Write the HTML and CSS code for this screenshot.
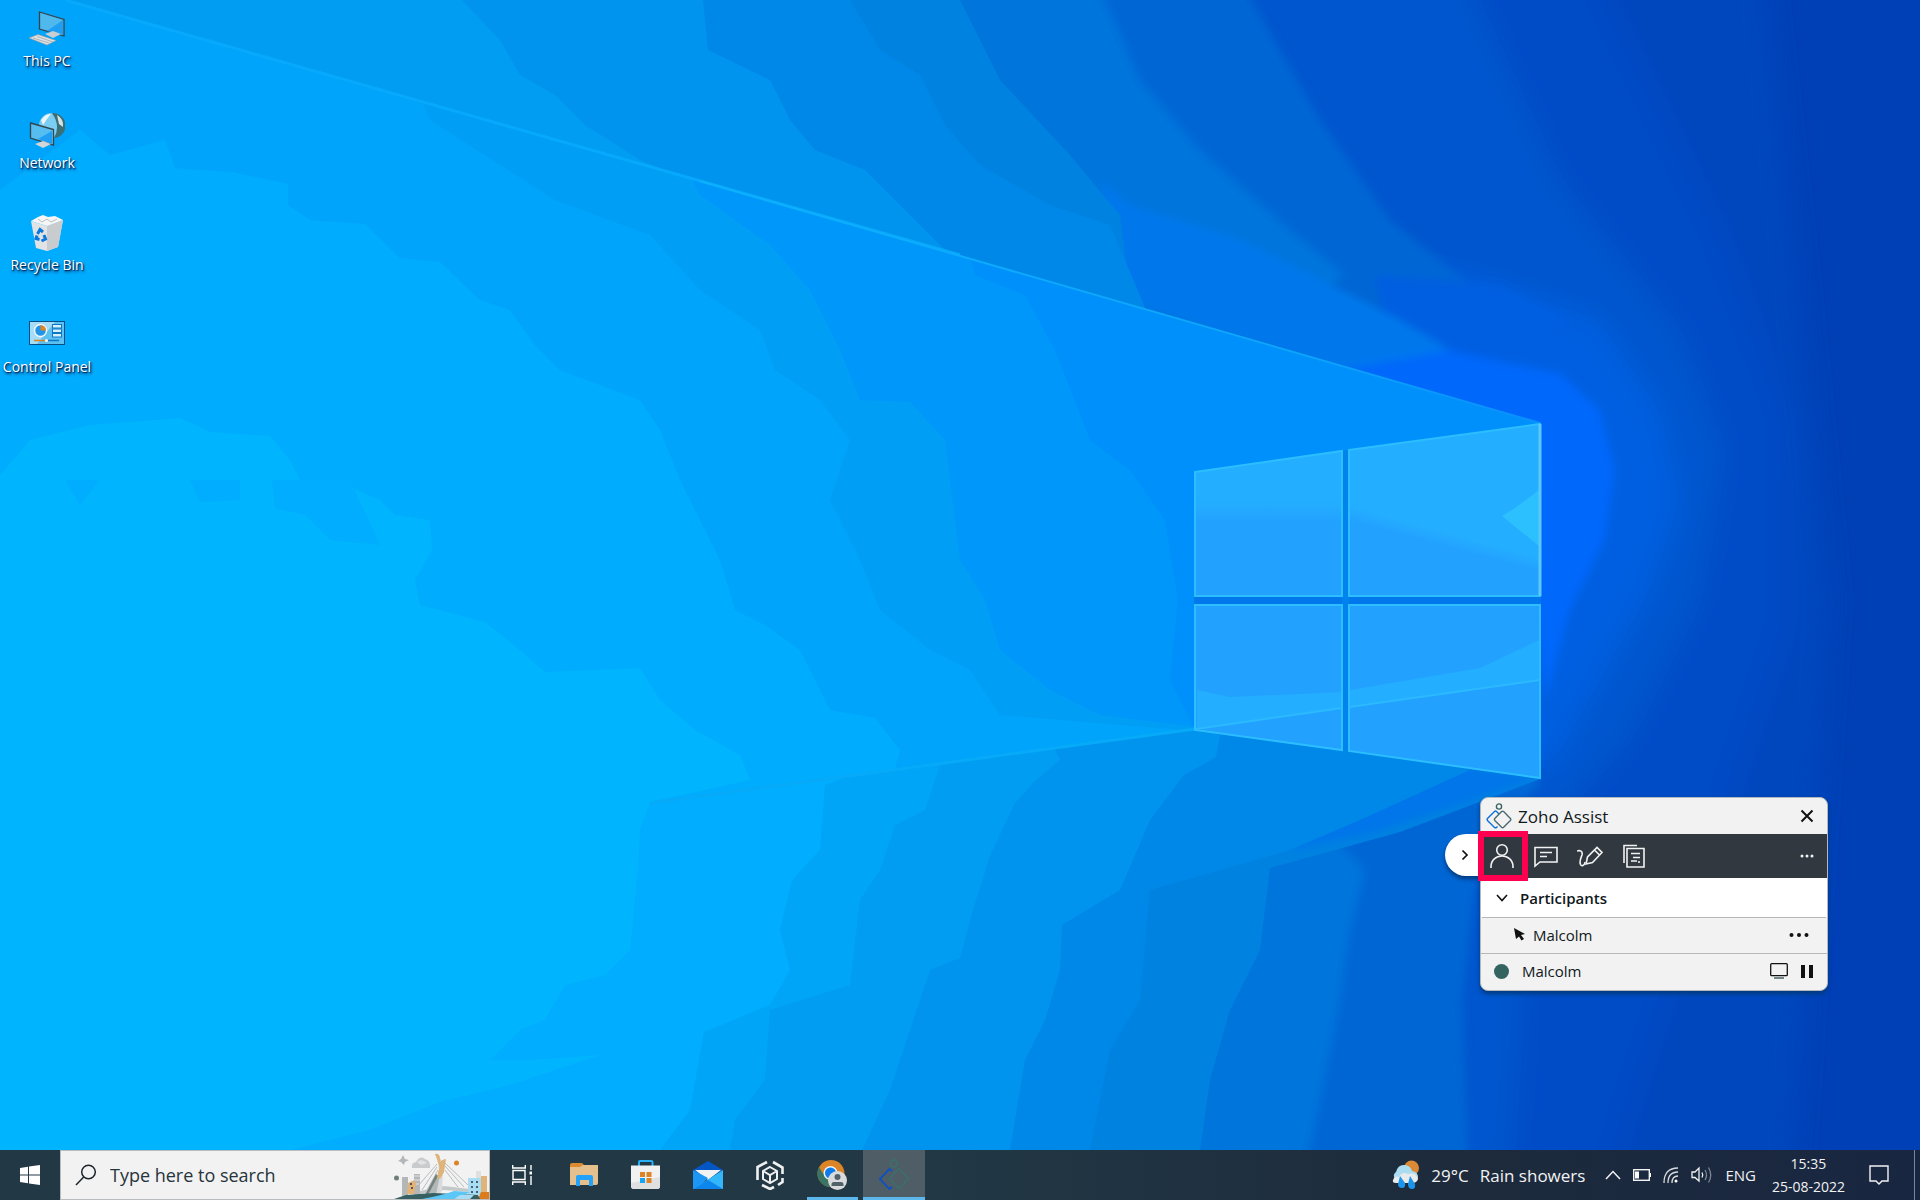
FILE: index.html
```html
<!DOCTYPE html>
<html lang="en">
<head>
<meta charset="utf-8">
<title>Desktop</title>
<link rel="stylesheet" href="styles.css">
</head>
<body>
<main class="desktop">
  <svg class="wallpaper" viewBox="0 0 1920 1150" preserveAspectRatio="none" aria-hidden="true">
    <defs>
      <filter id="soft" x="-10%" y="-10%" width="120%" height="120%"><feGaussianBlur stdDeviation="14"/></filter>
      <filter id="softer" x="-10%" y="-10%" width="120%" height="120%"><feGaussianBlur stdDeviation="4"/></filter>
      <linearGradient id="pane" x1="0" y1="0" x2="0" y2="1"><stop offset=".35" stop-color="#24aeff"/><stop offset=".5" stop-color="#22a1ff"/></linearGradient>
      <linearGradient id="paneRight" x1=".3" y1="0" x2="0" y2="1"><stop offset=".52" stop-color="#24aeff"/><stop offset=".6" stop-color="#22a1ff"/></linearGradient>
      <linearGradient id="ray" x1="0" y1="0" x2="1" y2="0"><stop offset="0" stop-color="#0cb0ff"/><stop offset=".7" stop-color="#0ea4fb"/><stop offset="1" stop-color="#0890ff"/></linearGradient>
      <clipPath id="beam"><path d="M0 0H65L1540 423V570L1195 729L650 802L0 900Z"/></clipPath>
    </defs>
    <rect width="1920" height="1150" fill="#0040b6"/>
    <g filter="url(#soft)">
      <path fill="#0046be" d="M-60-60H1760L1800 300L1830 600L1790 1210H-60Z"/>
      <path fill="#004cc6" d="M-60-60H1580L1720 230L1790 420L1790 620L1730 800L1600 1210H-60Z"/>
      <path fill="#0056ce" d="M-60-60H1450L1560 180L1680 330L1725 450L1700 600L1630 740L1530 850L1510 1210H-60Z"/>
      <path fill="#005ee0" d="M1300 240L1500 285L1600 320L1660 410L1680 500L1650 590L1600 680L1550 770L1400 700Z"/>
    </g>
    <g filter="url(#softer)">
      <path fill="#0066d4" d="M-20-20H1240L1320 120L1390 220L1470 285L1400 400L1540 785L1480 850L1462 1000L1468 1170H-20Z"/>
      <path fill="#005ee0" d="M1375 275L1500 285L1570 320L1400 400Z"/>
      <path fill="#0068fb" d="M1320 352L1430 345L1470 355L1560 373L1600 410L1615 470L1605 540L1570 610L1546 700L1530 560Z"/>
      <path fill="#0074dc" d="M-20-20H1096L1140 80L1200 150L1290 230L1345 275L1200 380V700L1365 870L1350 930L1340 1000L1320 1100L1305 1170H-20Z"/>
      <path fill="#0078ec" d="M1100 180L1130 205L1240 240L1330 285L1400 320L1450 350L1340 370L1120 300Z"/>
    </g>
    <path fill="#0082e0" d="M0 0H960L1000 80L1070 155L1120 215L1130 300L1200 700L1540 779L1400 832L1270 868L1260 950L1230 1010L1210 1080L1200 1150H0Z"/>
    <path fill="#0076ea" d="M1360 750L1538 778L1370 834L1290 850Z" filter="url(#softer)"/>
    <path fill="#0088e8" d="M0 0H850L880 50L920 75L945 125L980 165L1050 205L1110 225L1125 260L1150 320L1200 700L1470 770L1360 820L1290 850L1150 890L1140 1000L1110 1050L1090 1150H0Z"/>
    <path fill="#0094ee" d="M0 0H703L708 50L770 80L790 120L815 150L865 170L910 215L950 255L1195 729L1220 735L1216 757L1184 775L1150 820L1120 890L1062 925L1060 970L1045 1020L1025 1060L1010 1150H0Z"/>
    <path fill="#009df3" d="M0 0H462L500 40L520 75L555 95L585 125L640 160L700 185L1000 640L1060 760L1036 780L1015 803L990 856L972 913L960 958L930 970L910 1030L890 1090L862 1150H0Z"/>
    <path fill="#00a5f8" d="M65 0L460 114L820 500L980 757L940 765L925 810L895 825L880 870L860 900L850 985L770 1010L765 1080L735 1120L730 1150H0V0Z"/>
    <path fill="#00adfe" d="M0 190L80 130L160 160L290 600L860 700L900 757L825 785L820 850L792 880L780 930L790 970L770 1005L704 1032L690 1110L660 1150H0Z"/>
    <g clip-path="url(#beam)">
      <rect width="1600" height="960" fill="#0090fc"/>
      <path fill="#0097fa" d="M0 0H900L975 275L1025 295L1055 350L1090 440L1130 470L1165 520L1178 600L1170 680L1195 729V900H0Z"/>
      <path fill="#009ff5" d="M0 0H600L700 195L770 245L810 290L840 350L860 400L910 402L945 440L960 560L985 600L1000 650L1050 690L1100 715L1195 727V900H0Z"/>
      <path fill="#00a4fa" d="M0 0H380L430 120L500 165L555 200L650 235L700 290L760 330L775 370L820 400L850 440L830 500L860 560L880 610L930 650L970 670L1000 715L1180 730V900H0Z"/>
      <path fill="#00acfe" d="M0 190L80 130L110 155L165 140L175 168L232 172L288 184L288 205L310 220L365 224L400 258L440 262L480 300L510 310L535 345L560 370L640 400L660 430L680 480L720 560L735 610L765 625L800 650L830 710L875 718L900 750L860 900H0Z"/>
    </g>
    <path fill="#00b5fe" d="M0 475L30 440L90 425L180 418L210 432L270 436L290 460L300 480L345 485L380 500L395 515L430 520L432 550L415 580L420 605L485 622L520 650L545 672L640 668L660 700L695 730L740 755L750 780L650 802L640 830L638 870L630 950L605 975L565 985L545 1020L520 1030L490 1060L530 1060L600 1055L510 1085L440 1102L370 1130L290 1150H0Z"/>
    <path fill="#00adfe" d="M65 480H100L80 505ZM190 480H240V500L200 502ZM272 480H350L380 545L330 540L305 515L275 508Z"/>
    <g fill="none">
      <path d="M65 0L960 255" stroke="#06a9fc" stroke-width="3"/>
      <path d="M700 181L1540 423" stroke="url(#ray)" stroke-width="2"/>
      <path d="M650 803L1195 729" stroke="#06aaf8" stroke-width="3"/>
    </g>
    <g>
      <path d="M1194 596H1541V604H1194Z" fill="#0078ec"/>
      <path d="M1342 450H1349V750H1342Z" fill="#0083ec"/>
      <path fill="url(#pane)" stroke="#2cbeff" stroke-width="2" d="M1195 472L1342 451V596H1195Z"/>
      <path fill="url(#paneRight)" stroke="#2cbeff" stroke-width="2" d="M1349 450L1540 424V596H1349Z"/>
      <path fill="#22a1ff" stroke="#2cbeff" stroke-width="2" d="M1195 605H1342V750L1195 730ZM1349 605H1540V778L1349 751Z"/>
      <path fill="#24aeff" d="M1197 690L1230 697L1341 692V708L1197 728ZM1350 690L1480 668L1539 640V680L1350 706Z"/>
      <path fill="#2cc0ff" d="M1539 490L1515 508L1502 516L1539 546Z"/>
      <path fill="none" stroke="#2cbaff" stroke-width="2" d="M1196 729L1342 708M1349 707L1540 680"/>
      <path fill="none" stroke="#5cc8f4" stroke-width="3" d="M1540 424V596"/>
    </g>
  </svg>

  <nav class="shortcuts" aria-label="Desktop shortcuts">
    <a class="shortcut" href="#this-pc">
      <svg width="36" height="36" viewBox="0 0 36 36" aria-hidden="true">
        <path d="M10.500 1L35 8.500V25L10.500 18Z" fill="#4fb9ee" stroke="#33444c" stroke-width="1.300"/><path d="M18 20L34 9V24Z" fill="#1f9ff4"/><path d="M16 23L24 20L32 23L24 27Z" fill="#c9ced1"/><path d="M0 27L9 23.500L27 29.500L18 34Z" fill="#dfe2e4" stroke="#98a0a4" stroke-width=".7"/><path d="M4 27L20 32M8 25.500L24 31" stroke="#9da5a9" stroke-width=".8"/>
      </svg>
      <span>This PC</span>
    </a>
    <a class="shortcut" href="#network">
      <svg width="36" height="36" viewBox="0 0 36 36" aria-hidden="true">
        <circle cx="22.500" cy="12.500" r="12.500" fill="#7ccdf2"/><path d="M23 0A12.500 12.500 0 0 1 25 25Q32 13 23 0Z" fill="#3a6f75"/><path d="M28 2A12 12 0 0 1 34 14L30 11Z" fill="#d6e4e8"/><path d="M12 7Q17 0 22 1L18 6L14 12Z" fill="#eef6f8"/><path d="M1.500 10L24.500 16.500V32L1.500 25Z" fill="#55bdf0" stroke="#33444c" stroke-width="1.300"/><path d="M9 26L23 18V31Z" fill="#1f9ff4"/><path d="M6 31L14 28L22 31L14 35Z" fill="#d2d6d8"/>
      </svg>
      <span>Network</span>
    </a>
    <a class="shortcut" href="#recycle-bin">
      <svg width="36" height="36" viewBox="0 0 36 36" aria-hidden="true">
        <path d="M2 6L18 11L34 5L29 32L18 36L7 33Z" fill="#e1e3e5"/><path d="M18 11L34 5L29 32L18 36Z" fill="#c8cccf"/><path d="M2 6L9 2L14 0L19 2L26 1L34 5L18 11Z" fill="#f6f6f6"/><path d="M9 4L13 7L18 4L22 7L28 4" fill="none" stroke="#b9bfc3"/><g fill="none" stroke="#0b78dc" stroke-width="3"><path d="M8.500 19L11 14.500L14 17"/><path d="M15 20L16.500 24L12.500 26"/><path d="M10.500 24.500L7 23.500L8 20.500"/></g>
      </svg>
      <span>Recycle Bin</span>
    </a>
    <a class="shortcut" href="#control-panel">
      <svg width="36" height="36" viewBox="0 0 36 36" aria-hidden="true">
        <g transform="translate(0 -2)">
        <rect x=".5" y="6.500" width="35" height="23" fill="#5cc0f0" stroke="#0a4d84"/><path d="M1 7H26L8 29H1Z" fill="#a6dcf6"/><circle cx="11.500" cy="15.500" r="6" fill="#2196e8" stroke="#f4f8fa" stroke-width="1.500"/><path d="M11.500 15.500V10A5.500 5.500 0 0 1 17 15.500Z" fill="#dc8426"/><g fill="#d9f0fb" stroke="#0b78c8"><rect x="23.500" y="9.500" width="9" height="3.500"/><rect x="23.500" y="14" width="9" height="3.500"/><rect x="23.500" y="18.500" width="9" height="3.500"/></g><path d="M5 25.500H17" stroke="#dc8426" stroke-width="1.500"/><path d="M17 25.500H30" stroke="#0b78c8" stroke-width="1.500"/><circle cx="17.500" cy="25.500" r="1.500" fill="#fff"/>
        </g>
      </svg>
      <span>Control Panel</span>
    </a>
  </nav>

  <section class="assist" aria-label="Zoho Assist">
    <button class="assist-toggle" type="button" aria-label="Collapse">
      <svg width="10" height="14" viewBox="0 0 10 14"><path d="M2.500 2.500L7 7L2.500 11.500" fill="none" stroke="#111" stroke-width="1.700"/></svg>
    </button>
    <header class="assist-title">
      <svg width="26" height="26" viewBox="0 0 26 26" fill="none" stroke-width="1.400" aria-hidden="true">
        <circle cx="13" cy="3.500" r="2.600" stroke="#3c6464"/><path d="M13 11L10.500 8.500Q9.500 7.600 8.500 8.500L1.500 15.500Q.7 16.500 1.500 17.400L8.500 24.400Q9.500 25.200 10.500 24.400L11.500 23.400" stroke="#0a6fd8"/><path d="M15.600 8.600Q16.600 7.700 17.600 8.600L24.400 15.500Q25.200 16.500 24.400 17.400L17.600 24.300Q16.600 25.200 15.600 24.300L8.800 17.400Q8 16.500 8.800 15.500Z" stroke="#4c6a70"/>
      </svg>
      <h1>Zoho Assist</h1>
      <button class="plain" type="button" aria-label="Close">
        <svg width="14" height="14" viewBox="0 0 14 14"><path d="M1.500 1.500L12.500 12.500M12.500 1.500L1.500 12.500" stroke="#111" stroke-width="2"/></svg>
      </button>
    </header>
    <div class="assist-tools">
      <button class="tool tool-active" type="button" aria-label="Participants">
        <svg width="26" height="26" viewBox="0 0 26 26"><circle cx="13" cy="7" r="5.300"/><path d="M2 25V23.500C2 17 7 13 13 13S24 17 24 23.500V25"/></svg>
      </button>
      <button class="tool" type="button" aria-label="Chat">
        <svg width="26" height="26" viewBox="0 0 26 26"><path d="M2 4.500H24V19H7L2 23Z"/><path d="M7 9.500H19M7 13.500H14"/></svg>
      </button>
      <button class="tool" type="button" aria-label="Annotate">
        <svg width="26" height="26" viewBox="0 0 26 26"><path d="M0 8C3 7 6 8 5 12C4 15 2 18 3.500 21.500C4.500 23.500 7.500 23 8 19"/><path d="M9 21L10.500 14L20 4.500L25 9.500L15.500 19.500ZM17.500 7L22.500 12"/></svg>
      </button>
      <button class="tool" type="button" aria-label="Clipboard">
        <svg width="26" height="26" viewBox="0 0 26 26"><path d="M3 20V2.500H16"/><path d="M6 5.500H23V24H6ZM10 10.500H19M12 14.500H19M10 18H16M17 19H19"/></svg>
      </button>
      <button class="plain more" type="button" aria-label="More options">
        <svg width="14" height="6" viewBox="0 0 14 6" fill="#f2f2f2"><circle cx="2" cy="3" r="1.500"/><circle cx="7" cy="3" r="1.500"/><circle cx="12" cy="3" r="1.500"/></svg>
      </button>
    </div>
    <h2 class="assist-heading">
      <svg width="14" height="10" viewBox="0 0 14 10" aria-hidden="true"><path d="M2 2L7 7.500L12 2" fill="none" stroke="#111" stroke-width="1.600"/></svg>
      Participants
    </h2>
    <div class="assist-row person">
      <svg width="11" height="13" viewBox="0 0 11 13" aria-hidden="true"><path d="M0 0L11 6L7 7L10 11L7.500 12.500L5 8.500L2 11Z" fill="#111"/></svg>
      <span>Malcolm</span>
      <button class="plain" type="button" aria-label="Participant options">
        <svg width="20" height="6" viewBox="0 0 20 6" fill="#111"><circle cx="2.500" cy="3" r="2"/><circle cx="10" cy="3" r="2"/><circle cx="17.500" cy="3" r="2"/></svg>
      </button>
    </div>
    <div class="assist-row self">
      <i class="status"></i>
      <span>Malcolm</span>
      <button class="plain" type="button" aria-label="Displays">
        <svg width="18" height="16" viewBox="0 0 18 16" fill="none" stroke="#111"><rect x=".7" y=".7" width="16.600" height="12" rx="1" stroke-width="1.300"/><path d="M4 15H14" stroke="#46606a" stroke-width="1.500"/></svg>
      </button>
      <button class="plain" type="button" aria-label="Pause">
        <svg width="12" height="13" viewBox="0 0 12 13" fill="#111"><path d="M0 0H4V13H0ZM8 0H12V13H8Z"/></svg>
      </button>
    </div>
  </section>
</main>

<footer class="taskbar">
  <button class="start" type="button" aria-label="Start">
    <svg width="20" height="20" viewBox="0 0 20 20" fill="#fff"><path d="M0 3L8 1.800V9.500H0ZM9 1.600L20 0V9.500H9ZM0 10.500H8V18.200L0 17ZM9 10.500H20V20L9 18.400Z"/></svg>
  </button>
  <form class="search">
    <svg width="22" height="22" viewBox="0 0 22 22" fill="none" stroke="#1c262c" stroke-width="1.500" aria-hidden="true"><circle cx="13.500" cy="8" r="6.800"/><path d="M8.700 13L1 21"/></svg>
    <input type="text" aria-label="Search" placeholder="Type here to search">
    <svg width="95" height="47" viewBox="0 0 95 47" aria-hidden="true">
      <path d="M9 3L11 7L15 8L11 10L10 13L7 10L4 9L7 7Z" fill="#b4b7b9"/>
      <path d="M18 16Q17 11 22 10Q26 3 31 7Q37 9 36 16Z" fill="#c9cbcc"/><path d="M23 10Q28 6 33 11L27 13Z" fill="#e2e3e3"/>
      <circle cx="62.500" cy="11" r="2.500" fill="#dc8426"/><circle cx="2.500" cy="26" r="2.500" fill="#6e7f7b"/>
      <path d="M8 25H14V44H8ZM20 22H26V44H20Z" fill="#b4b7b8"/><path d="M20 24H26M20 28H26M20 32H26" stroke="#e2e3e3"/><path d="M14 31L20 28L22 32L20 42H13Z" fill="#e2b276"/><path d="M16 32H18M17 36H19" stroke="#4b5a60" stroke-width="2"/>
      <path d="M43 12L24 34M43 15L28 38M44 18L33 38M51 11L74 33M51 14L70 35M51 18L64 35" stroke="#a9adae" stroke-width=".8"/>
      <path d="M50 34L76 37V40L50 38L26 42V39Z" fill="#c4c8c9"/>
      <path d="M51 7L47 9L44 22L34 43H42L48 24Z" fill="#b2b8b8"/><path d="M44 24L34 43H31L42 22Z" fill="#74827d"/>
      <path d="M41 2Q45 1 46 6L49 20L48 38L46 43H42L45 28Q46 14 41 2Z" fill="#d8dadb"/>
      <path d="M41 2Q45 1 46 6L49 20L47 24Q45 10 41 2Z" fill="#e0b478"/><path d="M47 9L52 7L50 20L46 27L43 26Z" fill="#e0b478"/>
      <path d="M74 26H87V43H74Z" fill="#a8dcf4"/><path d="M77 30H84M77 35H84M77 40H84" stroke="#47606c" stroke-width="2" stroke-dasharray="2 3"/><path d="M82 19H87V26H82Z" fill="#dedfdf"/><path d="M87 24H93V42H87Z" fill="#e0b478"/><path d="M87 40H95V47H84Z" fill="#dc7c1c"/>
      <path d="M0 47L12 43L40 41L84 43L86 47Z" fill="#376063"/><path d="M28 47Q50 43 60 39L76 40Q68 45 60 47Z" fill="#5cc6f6"/><path d="M60 47L66 43L80 43L76 47Z" fill="#a8dcf4"/>
    </svg>
  </form>
  <button class="task" type="button" aria-label="Task view">
    <svg width="20" height="20" viewBox="0 0 20 20" fill="none" stroke="#fff" stroke-width="1.400"><path d="M1 5.500H13V14.500H1ZM.7 0V3H13.300V0M.7 20V17H13.300V20M19 0V5M19 11V20"/><path d="M17.500 8H20.500" stroke-width="3"/></svg>
  </button>
  <button class="task" type="button" aria-label="File Explorer">
    <svg width="28" height="24" viewBox="0 0 28 24"><path d="M0 2Q0 0 2 0H12L15 3H13V22H2Q0 22 0 20Z" fill="#dc8a30"/><path d="M0 4H10L13 2H28V20Q28 22 26 22H0Z" fill="#e6c08c"/><path d="M6 23V14Q6 12 8 12H21Q23 12 23 14V23H19V17H10V23Z" fill="#22a2fb"/></svg>
  </button>
  <button class="task" type="button" aria-label="Store">
    <svg width="30" height="30" viewBox="0 0 30 30"><path d="M8 7V2Q8 1 9 1H20Q21.500 1 21.500 2V7" fill="none" stroke="#28b0f4" stroke-width="2"/><path d="M0 5.500H29V26Q29 29 26 29H3Q0 29 0 26Z" fill="#f1f1f1"/><path d="M0 23L29 17V26Q29 29 26 29H3Q0 29 0 26Z" fill="#e0e0e0"/><path d="M9 12H14V17H9ZM15.500 12H20.500V17H15.500ZM15.500 18H20.500V23H15.500Z" fill="#dc8426"/><path d="M9 18H14V23H9Z" fill="#16a4f2"/></svg>
  </button>
  <button class="task" type="button" aria-label="Mail">
    <svg width="30" height="28" viewBox="0 0 30 28"><path d="M0 9L15 0L30 9L15 18Z" fill="#0456c4"/><path d="M2 9H28L15 19Z" fill="#f2f2f2"/><path d="M0 9L15 17L4 28H0Z" fill="#1d95f4"/><path d="M30 9L0 28H30Z" fill="#33b6fa"/><path d="M15 19L30 28H0Z" fill="#0c86ec"/></svg>
  </button>
  <button class="task" type="button" aria-label="Unity Hub">
    <svg width="28" height="30" viewBox="0 0 28 30" fill="none" stroke="#f0f0f0" stroke-width="2"><path d="M11 2L1.500 7V20M17 2L26.500 7.500V14M26.500 18V22L22 25M6 25L14 29L18 27" stroke-width="2.600"/><path d="M14 7L21 11V19L14 23L7 19V11ZM7 11L14 15L21 11M14 15V23"/></svg>
  </button>
  <button class="task running" type="button" aria-label="Chrome">
    <svg width="32" height="32" viewBox="0 0 32 32"><circle cx="15" cy="14.500" r="13.500" fill="#dc8426"/><path d="M3 8A13.500 13.500 0 0 0 14 28L17 20Q9 20 3 8Z" fill="#3c7464"/><circle cx="14.500" cy="14" r="7" fill="#f2f2f2"/><circle cx="14.500" cy="14" r="5.500" fill="#0c7cec"/><circle cx="21.500" cy="21.500" r="9.500" fill="#d8dadb"/><circle cx="21.500" cy="18" r="3" fill="#52626a"/><path d="M15.500 27V25Q15.500 23 18 23H25Q27.500 23 27.500 25V27Z" fill="#52626a"/></svg>
  </button>
  <button class="task running active" type="button" aria-label="Zoho Assist">
    <svg width="30" height="32" viewBox="0 0 30 32" fill="none" stroke-width="1.800"><circle cx="15" cy="4.500" r="3.500" stroke="#3c6e6c"/><path d="M13 12L10.500 10L1 20L10.500 30L13 28" stroke="#0a50c8"/><path d="M20 9.500L29.500 19.500L20 29.500L10.500 19.500Z" stroke="#3c6e6c" stroke-linejoin="round"/></svg>
  </button>

  <div class="tray">
    <button class="weather" type="button">
      <svg width="28" height="30" viewBox="0 0 28 30" aria-hidden="true"><circle cx="19.500" cy="8" r="7.500" fill="#dc8a34"/><path d="M6 21A5 5 0 0 1 4 12Q6 4 13 5Q19 6 20 11Q26 12 26 17Q26 21 21 21Z" fill="#aadcf2"/><path d="M1 20Q3 15 7 17Q10 11 16 14Q24 12 26 19Q25 23 20 23H4Q0 23 1 20Z" fill="#e9eaec"/><path d="M8 16L13 23Q14 28 10 28Q6 28 6 24ZM18 16L23 24Q24 29 20 29Q16 29 16 24Z" fill="#1b94ec"/></svg>
      <span>29°C</span><span>Rain showers</span>
    </button>
    <button class="plain" type="button" aria-label="Show hidden icons"><svg width="16" height="10" viewBox="0 0 16 10"><path d="M1 9L8 1.500L15 9" fill="none" stroke="#f2f2f2" stroke-width="1.500"/></svg></button>
    <button class="plain" type="button" aria-label="Battery"><svg width="18" height="12" viewBox="0 0 18 12"><rect x=".7" y=".7" width="15.600" height="10.600" fill="none" stroke="#f2f2f2" stroke-width="1.400"/><path d="M2 2.500H6V9.500H2ZM17 4H18V8H17Z" fill="#fff"/></svg></button>
    <button class="plain" type="button" aria-label="Wi-Fi"><svg width="16" height="16" viewBox="0 0 16 16" fill="none" stroke="#d8dcde" stroke-width="1.300"><path d="M1 16Q1 1 15 1M5 16Q5 5 15 5M9 16Q9 9 15 9"/><circle cx="13" cy="14" r="1.500" fill="#fff" stroke="none"/></svg></button>
    <button class="plain" type="button" aria-label="Volume"><svg width="22" height="18" viewBox="0 0 22 18" fill="none" stroke="#f2f2f2" stroke-width="1.300"><path d="M1 6H4L8 2V15L4 11.500H1ZM11 6.500Q12.500 9 11 11.500"/><path d="M14 4Q17 9 14 14M17.500 1.500Q22 9 17.500 16.500" stroke="#7d8692"/></svg></button>
    <button class="language" type="button">ENG</button>
    <button class="clock" type="button"><time>15:35</time><time>25-08-2022</time></button>
    <button class="plain notify" type="button" aria-label="Notifications"><svg width="20" height="20" viewBox="0 0 20 20"><path d="M1 1H19V16H13L10 19L7 16H1Z" fill="none" stroke="#f2f2f2" stroke-width="1.400"/></svg></button>
  </div>
</footer>
</body>
</html>
```

FILE: styles.css
```css
* {
  box-sizing: border-box;
}

body {
  margin: 0;
  height: 100vh;
  display: grid;
  grid-template-rows: 1fr 50px;
  overflow: hidden;
  font-family: "Open Sans", "Noto Sans", sans-serif;
  color: #10181c;
}

button {
  padding: 0;
  border: 0;
  background: none;
  color: inherit;
  font: inherit;
}

svg {
  display: block;
  flex: none;
}

.desktop {
  position: relative;
  min-height: 0;
  overflow: hidden;
}

.wallpaper {
  position: absolute;
  inset: 0;
  width: 100%;
  height: 100%;
}

.shortcuts {
  position: relative;
  width: 94px;
  padding-top: 11px;
  display: grid;
  grid-auto-rows: 102px;
}

.shortcut {
  display: flex;
  flex-direction: column;
  align-items: center;
  gap: 4px;
  color: #fff;
  font-size: 14px;
  line-height: 20px;
  white-space: nowrap;
  text-decoration: none;
  text-shadow: 1px 1px 1px #00285c, 1px 2px 3px #00285c;
}

/* Session window */

.assist {
  position: absolute;
  right: 92px;
  bottom: 159px;
  width: 348px;
  border: 1px solid #b4b8ba;
  border-radius: 8px;
  background: #f2f2f2;
  box-shadow: 0 3px 4px #023a7c;
  font-size: 15px;
}

.assist-toggle {
  position: absolute;
  top: 36px;
  left: -36px;
  width: 36px;
  height: 42px;
  padding-left: 15px;
  border-radius: 21px 0 0 21px;
  background: #fff;
  box-shadow: 0 3px 4px #023a7c;
}

.plain {
  display: grid;
  place-items: center;
}

.assist-title {
  height: 36px;
  padding: 0 13px 0 5px;
  display: flex;
  align-items: center;
  gap: 6px;
}

.assist-title h1 {
  flex: 1;
  margin: 0;
  font-size: 17px;
  font-weight: 500;
}

.assist-tools {
  height: 44px;
  padding-right: 13px;
  display: flex;
  align-items: stretch;
  background: #31383f;
}

.tool {
  width: 44px;
  padding-right: 2px;
  display: grid;
  place-items: center;
}

.tool svg {
  fill: none;
  stroke: #f2f2f2;
  stroke-width: 1.6;
}

.tool-active {
  outline: 6px solid #ff0050;
  outline-offset: -3px;
  z-index: 1;
}

.more {
  margin-left: auto;
}

.assist-heading {
  height: 39px;
  margin: 0;
  padding-left: 14px;
  display: flex;
  align-items: center;
  gap: 11px;
  background: #fff;
  font-size: 15px;
  font-weight: 600;
}

.assist-row {
  height: 36px;
  padding-bottom: 2px;
  display: flex;
  align-items: center;
  border-top: 1px solid #b4b8ba;
}

.assist-row span {
  flex: 1;
}

.person {
  margin: 0 1px;
  padding-right: 17px;
  padding-left: 32px;
  gap: 8px;
}

.self {
  height: 37px;
  padding-right: 14px;
  padding-left: 13px;
  gap: 13px;
}

.self span {
  font-weight: 500;
}

.status {
  width: 15px;
  height: 15px;
  border-radius: 50%;
  background: #34645f;
}

/* Taskbar */

.taskbar {
  display: flex;
  background: linear-gradient(90deg, #223845 0%, #223845 48%, #1d2b3c 75%, #192641 100%);
  color: #f2f2f2;
}

.start {
  width: 60px;
  display: grid;
  place-items: center;
}

.search {
  width: 430px;
  margin-right: 1px;
  padding-left: 14px;
  display: flex;
  align-items: center;
  gap: 13px;
  border: 1px solid #b8bcbe;
  background: #f2f2f2;
}

.search input {
  flex: 1;
  min-width: 0;
  padding: 0;
  border: 0;
  background: none;
  font: 18px "Open Sans", "Noto Sans", sans-serif;
}

.search input::placeholder {
  color: #26343c;
  opacity: 1;
}

.task {
  width: 62px;
  display: grid;
  place-items: center;
  background-repeat: no-repeat;
  background-position: center bottom;
  background-size: 51px 3px;
}

.running {
  background-image: linear-gradient(#5cb8ec, #5cb8ec);
}

.active {
  background-color: #4e5d66;
  background-size: 100% 3px;
}

.tray {
  margin-left: auto;
  padding-right: 31px;
  display: flex;
  align-items: center;
  gap: 12px;
  background: linear-gradient(#7c8590, #7c8590) right 5px top / 1px 100% no-repeat;
}

.weather {
  margin-right: 8px;
  display: flex;
  align-items: center;
  gap: 11px;
  font-size: 17px;
}

.language {
  font-size: 15px;
}

.clock {
  margin-left: 4px;
  display: flex;
  flex-direction: column;
  align-items: center;
  font-size: 14px;
  line-height: 23px;
}

.notify {
  margin-left: 12px;
}
```
